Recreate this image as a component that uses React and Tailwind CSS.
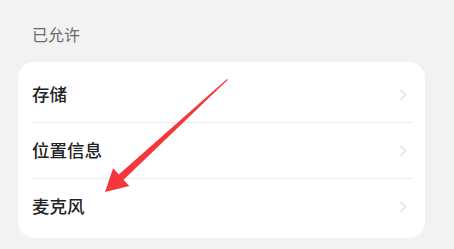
import { ChevronRight } from 'lucide-react';

const rows = ['存储', '位置信息', '麦克风'];

function Arrow() {
    // red annotation arrow lying over the list
    return (
        <svg className="absolute left-0 top-0 pointer-events-none" width="454" height="249" viewBox="0 0 454 249">
            <polygon
                points="227.8,79.8 123.6,179.7 129.3,185.9 105,192 113.1,168.3 118.8,174.5 227,79"
                fill="#f2383a"
            />
        </svg>
    );
}

export default function App() {
    return (
        <div
            className="relative w-[454px] h-[249px] bg-[#f1f2f4] overflow-hidden"
            style={{ fontFamily: '"Noto Sans CJK SC", "Noto Sans", sans-serif' }}
        >
            {/* Section title */}
            <div className="h-[62px] pl-[32px] pt-[24px] text-[16px] leading-[20px] text-[#6b6b6b]">已允许</div>

            {/* Permission list */}
            <div className="ml-[18px] w-[407px] bg-white rounded-[16px] pt-[5px] pb-[4px]">
                {rows.map((label, idx) => (
                    <div key={idx}>
                        {idx > 0 && <div className="ml-[14px] mr-[13px] h-px bg-[#ececec]"></div>}
                        <div className="h-[55px] flex items-center justify-between pl-[14px] pr-[12px]">
                            <span className="text-[17.5px] font-medium text-[#222]">{label}</span>
                            <ChevronRight size={20} strokeWidth={1.2} className="text-[#c4c4c4]" />
                        </div>
                    </div>
                ))}
            </div>

            <Arrow />
        </div>
    );
}
